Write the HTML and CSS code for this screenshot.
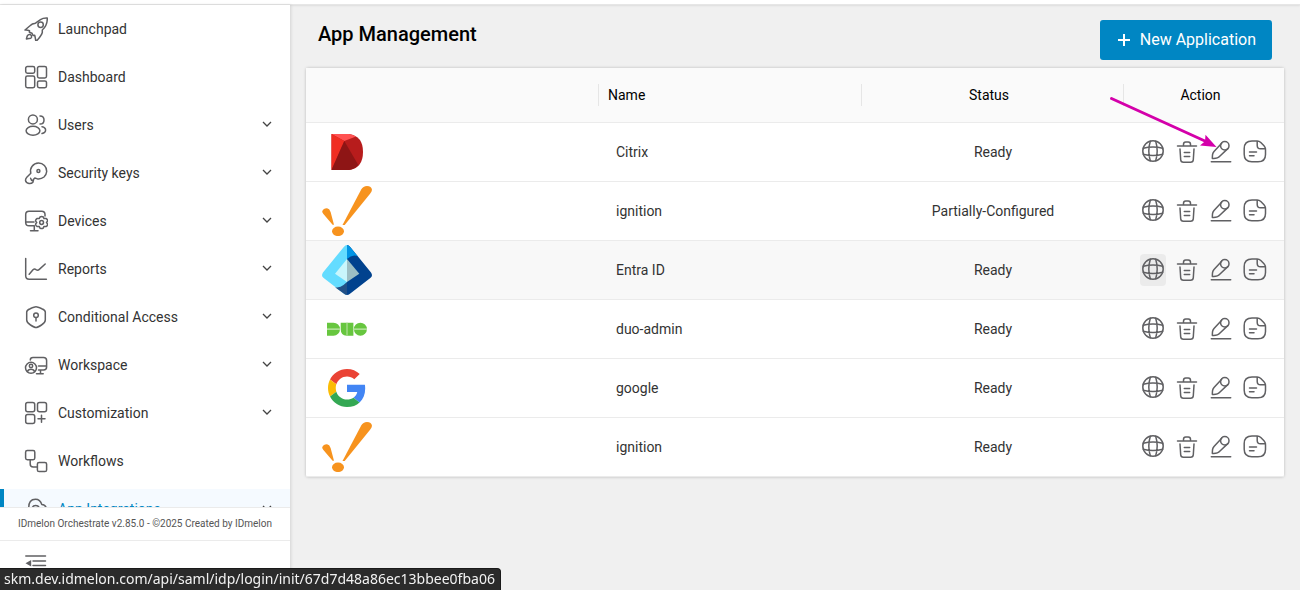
FILE: index.html
```html
<!DOCTYPE html>
<html lang="en">
<head>
<meta charset="utf-8">
<title>App Management</title>
<link rel="stylesheet" href="styles.css">
</head>
<body>
<svg class="sprite" aria-hidden="true">
  <symbol id="chevron" viewBox="0 0 12 12"><path d="M2 4l4 4 4-4"/></symbol>
  <symbol id="globe" viewBox="0 0 24 24"><circle cx="12" cy="11" r="10.2"/><path d="M9.300 1.300Q6.300 11 9.300 20.700M14.700 1.300Q17.700 11 14.700 20.700M2.300 8.300Q12 5.500 21.700 8.300M2.300 14.200Q12 17 21.700 14.200"/></symbol>
  <symbol id="trash" viewBox="0 0 24 24"><path d="M2.500 6h19M8.500 6V4.300Q8.500 2 10.700 2h2.600q2.200 0 2.200 2.300V6M5 9l.7 10.800q.2 2.500 2.700 2.500h7.200q2.500 0 2.700-2.500L19 9M9.300 12.500h5.400M9.300 16.500h5.400"/></symbol>
  <symbol id="pen" viewBox="0 0 24 24"><path d="M2.300 21.700h19.400M12.900 2.900L5 11.500Q3.700 13 3.500 14.800L3.300 18.400q3.200.2 5-.5 1.500-.6 2.700-1.900l7.800-7.400"/><circle cx="15.800" cy="5.800" r="4.200"/></symbol>
  <symbol id="doc" viewBox="0 0 24 24"><path d="M14.200.9H9Q1.200.9 1.200 8.500v5.700q0 7.500 7.600 7.500h6.200q7.500 0 7.500-7.300V9.500q0-2.200-1.500-3.700l-3.200-3.300Q16.200.9 14.200.9zM14.200.9v4.600q0 3.300 3.300 3.300h5M6.500 12h7M6.500 15.700h4.500"/></symbol>
  <symbol id="logo-ignition" viewBox="0 0 50 50"><g fill="#f7931e"><path d="M20.500 39L39.200 3.500Q41.200 0 45 0q4.500.3 5 3.800-.2 1.900-1.900 4L22.700 39z"/><path d="M.2 25.200Q1.500 22.200 5 22.300q2.500.3 3.600 3.600L12 38.800h-1.400L1.400 28Q.1 26.500.2 25.200z"/><ellipse cx="16" cy="45.300" rx="6" ry="4.800"/></g></symbol>
</svg>

<div class="app">
  <header class="topbar"></header>
  <aside class="sidebar">
    <nav class="nav">
      <a class="nav-item" href="#"><svg class="icon" viewBox="0 0 24 24"><path d="M23.300 1Q19 .8 16.500 2.600L11.500 6.200Q8 6.500 6 8.700L1 13Q3.300 12.700 5.500 13.700L5.400 15.300 8 16.200 9 18.500l1.700-.2Q11.300 20.500 11.700 23.300h1.500Q17.500 18.500 18.300 15.500V13Q23.500 8.500 23.300 1z"/><circle cx="16.600" cy="7.800" r="2.700"/><path d="M3.300 18.800Q4.300 17 6.300 17.500 8 18.300 7.500 20.300 6.700 21.700 5 21.600L2.400 22z"/></svg><span>Launchpad</span></a>
      <a class="nav-item" href="#"><svg class="icon" viewBox="0 0 24 24"><rect x="1.700" y="1.500" width="9" height="6.700" rx="1.700"/><rect x="13.500" y="1.500" width="9" height="11.500" rx="1.700"/><rect x="1.700" y="11" width="9" height="11.700" rx="1.700"/><rect x="13.500" y="15.900" width="9" height="6.800" rx="1.700"/></svg><span>Dashboard</span></a>
      <a class="nav-item" href="#"><svg class="icon" viewBox="0 0 24 24"><circle cx="8.900" cy="6.400" r="4.500"/><ellipse cx="9" cy="17.700" rx="6.900" ry="4.500"/><path d="M16 2.900q4 0 4 4.100t-4 4.100M18 13.700q3.600.6 3.600 3.400T18 20.600"/></svg><span>Users</span><svg class="chevron"><use href="#chevron"/></svg></a>
      <a class="nav-item" href="#"><svg class="icon" viewBox="0 0 24 24"><path d="M6.800 12.300Q5.800 8.200 8.100 5.300 10.500 2 14.500 2q3.500 0 5.900 2.500 2.500 2.500 2.300 6-.3 3.300-2.700 5.500-2.800 2.300-6.500 1.900L10.800 17 9.600 18.300 8.900 21.200Q7.500 22.800 5 22.500 2 22 1.500 19.300 1.500 17.500 2.800 16.200zM6.600 17.200l1 2.300 2-.6"/><circle cx="14.400" cy="10" r="1.500"/></svg><span>Security keys</span><svg class="chevron"><use href="#chevron"/></svg></a>
      <a class="nav-item" href="#"><svg class="icon" viewBox="0 0 24 24"><path d="M21 7V5.500Q21 2.200 17.700 2.200H5Q1.700 2.200 1.700 5.500v8Q1.700 16.800 5 16.800h5.300M1.700 13h8.300M10.300 17v4.500M6.500 21.700h7.500"/><path d="M16 8q1.700-1 3.300 0l.7 1.600 2-.2q1.600 1 1.700 2.500L22.500 13.500l1.200 1.600q-.2 1.700-1.700 2.500l-2-.2-.8 1.700q-1.500.9-3.200 0l-.8-1.700-2 .2q-1.500-.8-1.700-2.500l1.200-1.600-1.200-1.600q.2-1.500 1.700-2.500l2 .2z"/><circle cx="17.600" cy="13.500" r="1.900"/></svg><span>Devices</span><svg class="chevron"><use href="#chevron"/></svg></a>
      <a class="nav-item" href="#"><svg class="icon" viewBox="0 0 24 24"><path d="M1.700 1.500v17.200q0 3.500 3.500 3.500h17.200M5.200 17.300l3.800-4.600q1.500-1.300 3-.1 1.800 1.200 3.300-.2L21.200 7"/></svg><span>Reports</span><svg class="chevron"><use href="#chevron"/></svg></a>
      <a class="nav-item" href="#"><svg class="icon" viewBox="0 0 24 24"><path d="M12 1.800q1.200 0 5.800 1.900 3.400 1.300 3.500 3.300V15q0 2.700-3.800 5-4 2.600-5.500 2.600T6.500 20Q2.700 17.700 2.700 15V7Q2.800 5 6.200 3.700 10.800 1.800 12 1.800z"/><circle cx="12" cy="10.200" r="2.300"/><path d="M12 12.500V16"/></svg><span>Conditional Access</span><svg class="chevron"><use href="#chevron"/></svg></a>
      <a class="nav-item" href="#"><svg class="icon" viewBox="0 0 24 24"><path d="M6.300 7Q6.300 4.500 9 4.500h10.500q3.100 0 3.100 3v6.400q0 3-3.100 3h-5M14.500 13h8M16.500 17v3.500M12.500 20.700h6.700"/><circle cx="7" cy="14.800" r="5.500"/><circle cx="7" cy="12.900" r="1.700"/><path d="M3.500 18.500q.7-2.200 3.500-2.200t3.500 2.200"/></svg><span>Workspace</span><svg class="chevron"><use href="#chevron"/></svg></a>
      <a class="nav-item" href="#"><svg class="icon" viewBox="0 0 24 24"><rect x="1.700" y="1.600" width="9" height="9.200" rx="2"/><rect x="13.500" y="1.600" width="9" height="9.200" rx="2"/><rect x="1.700" y="13.400" width="9" height="9.200" rx="2"/><path d="M14 17.800h7M17.500 14.300v7"/></svg><span>Customization</span><svg class="chevron"><use href="#chevron"/></svg></a>
      <a class="nav-item" href="#"><svg class="icon" viewBox="0 0 24 24"><rect x="1.600" y="1.600" width="9.200" height="9.200" rx="1.700"/><rect x="13.400" y="13.400" width="9.200" height="9.200" rx="1.700"/><path d="M6.200 11v4q0 3 3 3h4"/></svg><span>Workflows</span></a>
      <a class="nav-item nav-item-active" href="#"><svg class="icon" viewBox="0 0 24 24"><path d="M4.800 11Q4.500 2.300 11.500 2.300q4.700 0 6.300 5.200 4.700.5 4.700 5.500 0 5-5.500 5H6.500Q1.500 18 1.500 14.500T4.800 11M8 12q.3-3.500 3.700-3.500T15.500 12"/></svg><span>App Integrations</span><svg class="chevron"><use href="#chevron"/></svg></a>
    </nav>
    <p class="version">IDmelon Orchestrate v2.85.0 - ©2025 Created by IDmelon</p>
    <div class="collapse-bar">
      <button class="collapse" type="button" aria-label="Collapse sidebar"><svg class="icon" viewBox="0 0 24 24"><path d="M1.800 5h19.700M9 10h12.500M9 14.500h12.500M1.800 19.500h19.700"/><path class="solid" d="M1.500 12.300L7.200 9v6.500z"/></svg></button>
    </div>
  </aside>

  <main class="main">
    <div class="page-head">
      <h1 class="title">App Management</h1>
      <button class="new-app" type="button"><svg class="plus" viewBox="0 0 12 12"><path d="M0 6h12M6 0v12"/></svg>New Application</button>
    </div>
    <div class="panel">
      <table class="apps">
        <colgroup><col><col class="col-name"><col class="col-status"><col class="col-action"></colgroup>
        <thead>
          <tr><th scope="col" aria-label="Logo"></th><th scope="col" class="name"><div class="label">Name</div></th><th scope="col"><div class="label">Status</div></th><th scope="col"><div class="label">Action</div></th></tr>
        </thead>
        <tbody>
          <tr>
            <td class="logo-cell"><svg class="logo" viewBox="0 0 50 50"><path fill="#b71c1c" d="M9.500 7H27q14 2 14 18T27 43H9.500z"/><path fill="#ff5252" d="M9.500 7H27q4 .5 7 2.500L22.300 14z"/><path fill="#f02d22" d="M9.500 7l12.800 7L9.500 43z"/><path fill="#8e1515" d="M22.300 14L9.500 43H27q5-.3 9.300-5z"/></svg></td>
            <td class="name">Citrix</td><td class="status">Ready</td>
            <td><div class="actions"><button type="button" aria-label="Open"><svg class="icon"><use href="#globe"/></svg></button><button type="button" aria-label="Delete"><svg class="icon"><use href="#trash"/></svg></button><button type="button" aria-label="Edit"><svg class="icon"><use href="#pen"/></svg></button><button type="button" aria-label="Details"><svg class="icon"><use href="#doc"/></svg></button></div></td>
          </tr>
          <tr>
            <td class="logo-cell"><svg class="logo"><use href="#logo-ignition"/></svg></td>
            <td class="name">ignition</td><td class="status">Partially-Configured</td>
            <td><div class="actions"><button type="button" aria-label="Open"><svg class="icon"><use href="#globe"/></svg></button><button type="button" aria-label="Delete"><svg class="icon"><use href="#trash"/></svg></button><button type="button" aria-label="Edit"><svg class="icon"><use href="#pen"/></svg></button><button type="button" aria-label="Details"><svg class="icon"><use href="#doc"/></svg></button></div></td>
          </tr>
          <tr class="row-active">
            <td class="logo-cell"><svg class="logo" viewBox="0 0 50 50"><path fill="#64dcff" d="M25 0Q23.300 0 22 1.700L1 27.500q-2.300 3.300.7 5.500L22 48.700q1.500 1.300 3 1.300z"/><path fill="#01428e" d="M25 0q1.700 0 3 1.700L49 27.500q2.300 3.300-.7 5.500L28 48.700Q26.500 50 25 50z"/><path fill="#0294e4" d="M25 0q1.700 0 3 1.700L35.500 11Q30 9 25 14z"/><path fill="#225086" d="M13 42.300q5 .8 8.500-2.200L25 37v13q-1.500 0-3-1.300z"/><path fill="#c9f6fc" d="M25 14v23L13 28.700z"/><path fill="#9dbfc4" d="M25 14l12.300 14.700L25 37z"/></svg></td>
            <td class="name">Entra ID</td><td class="status">Ready</td>
            <td><div class="actions"><button class="pressed" type="button" aria-label="Open"><svg class="icon"><use href="#globe"/></svg></button><button type="button" aria-label="Delete"><svg class="icon"><use href="#trash"/></svg></button><button type="button" aria-label="Edit"><svg class="icon"><use href="#pen"/></svg></button><button type="button" aria-label="Details"><svg class="icon"><use href="#doc"/></svg></button></div></td>
          </tr>
          <tr>
            <td class="logo-cell"><svg class="logo" viewBox="0 0 50 50"><g fill="#67c63f"><path d="M5 18.700h6.500a6.500 6.500 0 0 1 0 13H5zM18.700 18.700h6v13q-6-.2-6-6.500zM24.700 18.700h6.700v13h-6.700z"/><circle cx="38.400" cy="25.200" r="6.500"/></g><path fill="#c5e9b2" d="M5 24.600h13v1.200H5zM32 24.600h13v1.200H32z"/><path fill="#a6dc8b" d="M24.300 18.700h1.400v13h-1.400z"/></svg></td>
            <td class="name">duo-admin</td><td class="status">Ready</td>
            <td><div class="actions"><button type="button" aria-label="Open"><svg class="icon"><use href="#globe"/></svg></button><button type="button" aria-label="Delete"><svg class="icon"><use href="#trash"/></svg></button><button type="button" aria-label="Edit"><svg class="icon"><use href="#pen"/></svg></button><button type="button" aria-label="Details"><svg class="icon"><use href="#doc"/></svg></button></div></td>
          </tr>
          <tr>
            <td class="logo-cell"><svg class="logo" viewBox="0 0 50 50"><svg x="6" y="6" width="38" height="38" viewBox="0 0 48 48"><path fill="#EA4335" d="M24 9.500c3.540 0 6.710 1.220 9.210 3.600l6.850-6.850C35.900 2.380 30.470 0 24 0 14.620 0 6.510 5.380 2.560 13.220l7.980 6.190C12.430 13.720 17.740 9.500 24 9.500z"/><path fill="#4285F4" d="M46.980 24.550c0-1.570-.15-3.090-.38-4.550H24v9.020h12.940c-.58 2.960-2.260 5.480-4.780 7.180l7.730 6c4.510-4.180 7.090-10.360 7.090-17.650z"/><path fill="#FBBC05" d="M10.530 28.590c-.48-1.450-.76-2.990-.76-4.590s.27-3.140.76-4.590l-7.980-6.190C.92 16.460 0 20.120 0 24c0 3.880.92 7.540 2.560 10.780l7.970-6.190z"/><path fill="#34A853" d="M24 48c6.480 0 11.930-2.130 15.890-5.810l-7.730-6c-2.150 1.450-4.920 2.300-8.160 2.300-6.260 0-11.570-4.220-13.470-9.910l-7.980 6.190C6.510 42.620 14.620 48 24 48z"/></svg></svg></td>
            <td class="name">google</td><td class="status">Ready</td>
            <td><div class="actions"><button type="button" aria-label="Open"><svg class="icon"><use href="#globe"/></svg></button><button type="button" aria-label="Delete"><svg class="icon"><use href="#trash"/></svg></button><button type="button" aria-label="Edit"><svg class="icon"><use href="#pen"/></svg></button><button type="button" aria-label="Details"><svg class="icon"><use href="#doc"/></svg></button></div></td>
          </tr>
          <tr>
            <td class="logo-cell"><svg class="logo"><use href="#logo-ignition"/></svg></td>
            <td class="name">ignition</td><td class="status">Ready</td>
            <td><div class="actions"><button type="button" aria-label="Open"><svg class="icon"><use href="#globe"/></svg></button><button type="button" aria-label="Delete"><svg class="icon"><use href="#trash"/></svg></button><button type="button" aria-label="Edit"><svg class="icon"><use href="#pen"/></svg></button><button type="button" aria-label="Details"><svg class="icon"><use href="#doc"/></svg></button></div></td>
          </tr>
        </tbody>
      </table>
      <svg class="pointer" viewBox="0 0 109 53" aria-hidden="true"><path d="M2.500 2.500L97 45.500" fill="none" stroke="#d400aa" stroke-width="3" stroke-linecap="round"/><path fill="#d400aa" d="M107.500 51L96.500 38.700l-.5 6.500-5 4.300z"/></svg>
    </div>
  </main>
</div>
<div class="link-status">skm.dev.idmelon.com/api/saml/idp/login/init/67d7d48a86ec13bbee0fba06</div>
</body>
</html>
```

FILE: styles.css
```css
* { box-sizing: border-box; }

body {
  margin: 0;
  font-family: Roboto, "Liberation Sans", sans-serif;
  font-size: 14px;
  line-height: 20px;
  color: #333;
  background: #f0f0f0;
}

button { font: inherit; color: inherit; border: 0; background: none; padding: 0; }

.sprite { position: absolute; width: 0; height: 0; }

.app {
  display: grid;
  grid-template: 5px minmax(0, 1fr) / 290px minmax(0, 1fr);
  height: 100vh;
  overflow: hidden;
}

.topbar {
  grid-column: 1 / -1;
  background: #fff;
  border-bottom: 1px solid #e6e6e6;
  box-shadow: 0 1px 2px rgba(0, 0, 0, 0.08);
}

.sidebar {
  display: flex;
  flex-direction: column;
  min-height: 0;
  background: #fff;
  box-shadow: 1px 0 3px rgba(0, 0, 0, 0.12);
}

.nav {
  flex: 1;
  min-height: 0;
  overflow: hidden;
  display: flex;
  flex-direction: column;
  gap: 8px;
  padding-top: 4px;
}

.nav-item {
  flex: none;
  display: flex;
  align-items: center;
  gap: 10px;
  height: 40px;
  padding: 0 16px 0 20px;
  border-left: 4px solid transparent;
  color: #333;
  text-decoration: none;
}

.nav-item-active {
  border-left-color: #0086c3;
  background: #f5faff;
  color: #0086c3;
}

.icon {
  display: block;
  flex: none;
  width: 24px;
  height: 24px;
  fill: none;
  stroke: #606063;
  stroke-width: 1.5;
  stroke-linecap: round;
  stroke-linejoin: round;
}

.solid { fill: #606063; stroke: none; }

.chevron {
  width: 12px;
  height: 12px;
  margin: 0 1px 2px auto;
  fill: none;
  stroke: #444;
  stroke-width: 1.3;
}

.version {
  margin: 0;
  padding: 6px 0;
  border-top: 1px solid #ebebeb;
  font-size: 10px;
  color: #555;
  text-align: center;
}

.collapse-bar {
  height: 50px;
  padding: 10px 24px;
  border-top: 1px solid #ebebeb;
}

.main { padding: 15px; }

.page-head {
  display: flex;
  justify-content: space-between;
  align-items: flex-start;
  padding: 0 13px 8px;
}

.title {
  margin: 0;
  font-size: 20px;
  line-height: 28px;
  font-weight: 500;
  color: #000;
}

.new-app {
  display: flex;
  align-items: center;
  gap: 10px;
  height: 40px;
  padding: 0 16px 0 18px;
  border-radius: 3px;
  background: #0086c3;
  color: #fff;
  font-size: 16px;
}

.plus { width: 12px; height: 12px; stroke: #fff; stroke-width: 2; }

.panel {
  position: relative;
  margin: 0 1px;
  background: #fff;
  border-radius: 2px;
  box-shadow: 0 0 3px rgba(0, 0, 0, 0.25);
}

.apps {
  width: 100%;
  table-layout: fixed;
  border-collapse: separate;
  border-spacing: 0;
  text-align: center;
}

.col-name { width: 263px; }
.col-status { width: 262px; }
.col-action { width: 161px; }

.apps th {
  height: 55px;
  padding: 0;
  background: #fafafa;
  border-bottom: 1px solid #ebebeb;
  font-weight: 400;
  color: #000;
}

.label {
  padding: 1px 16px 1px 9px;
  border-left: 1px solid #e6e6e6;
}

th.name { text-align: left; }

.apps td {
  height: 59px;
  padding: 0;
  border-bottom: 1px solid #ebebeb;
}

.apps td.logo-cell { padding-left: 16px; }
.apps td.name { padding-left: 18px; text-align: left; }
.apps td.status { padding-left: 2px; }

.row-active { background: #f8f8f8; }

.logo { display: block; width: 50px; height: 50px; }

.actions { display: flex; justify-content: center; gap: 8px; }

.actions button {
  display: flex;
  align-items: center;
  justify-content: center;
  width: 26px;
  height: 32px;
  border-radius: 4px;
}

.actions .pressed { background: #ebebeb; }

.pointer {
  position: absolute;
  top: 28px;
  right: 66px;
  width: 109px;
  height: 53px;
}

.link-status {
  position: fixed;
  left: 0;
  bottom: 0;
  padding: 0 5px 1px 4px;
  border: 1px solid #1a1a1a;
  border-width: 1px 1px 0 0;
  border-radius: 0 4px 0 0;
  background: #2b2b2b;
  color: #f2f2f2;
  font-family: "Noto Sans", sans-serif;
  font-size: 14px;
}
```
